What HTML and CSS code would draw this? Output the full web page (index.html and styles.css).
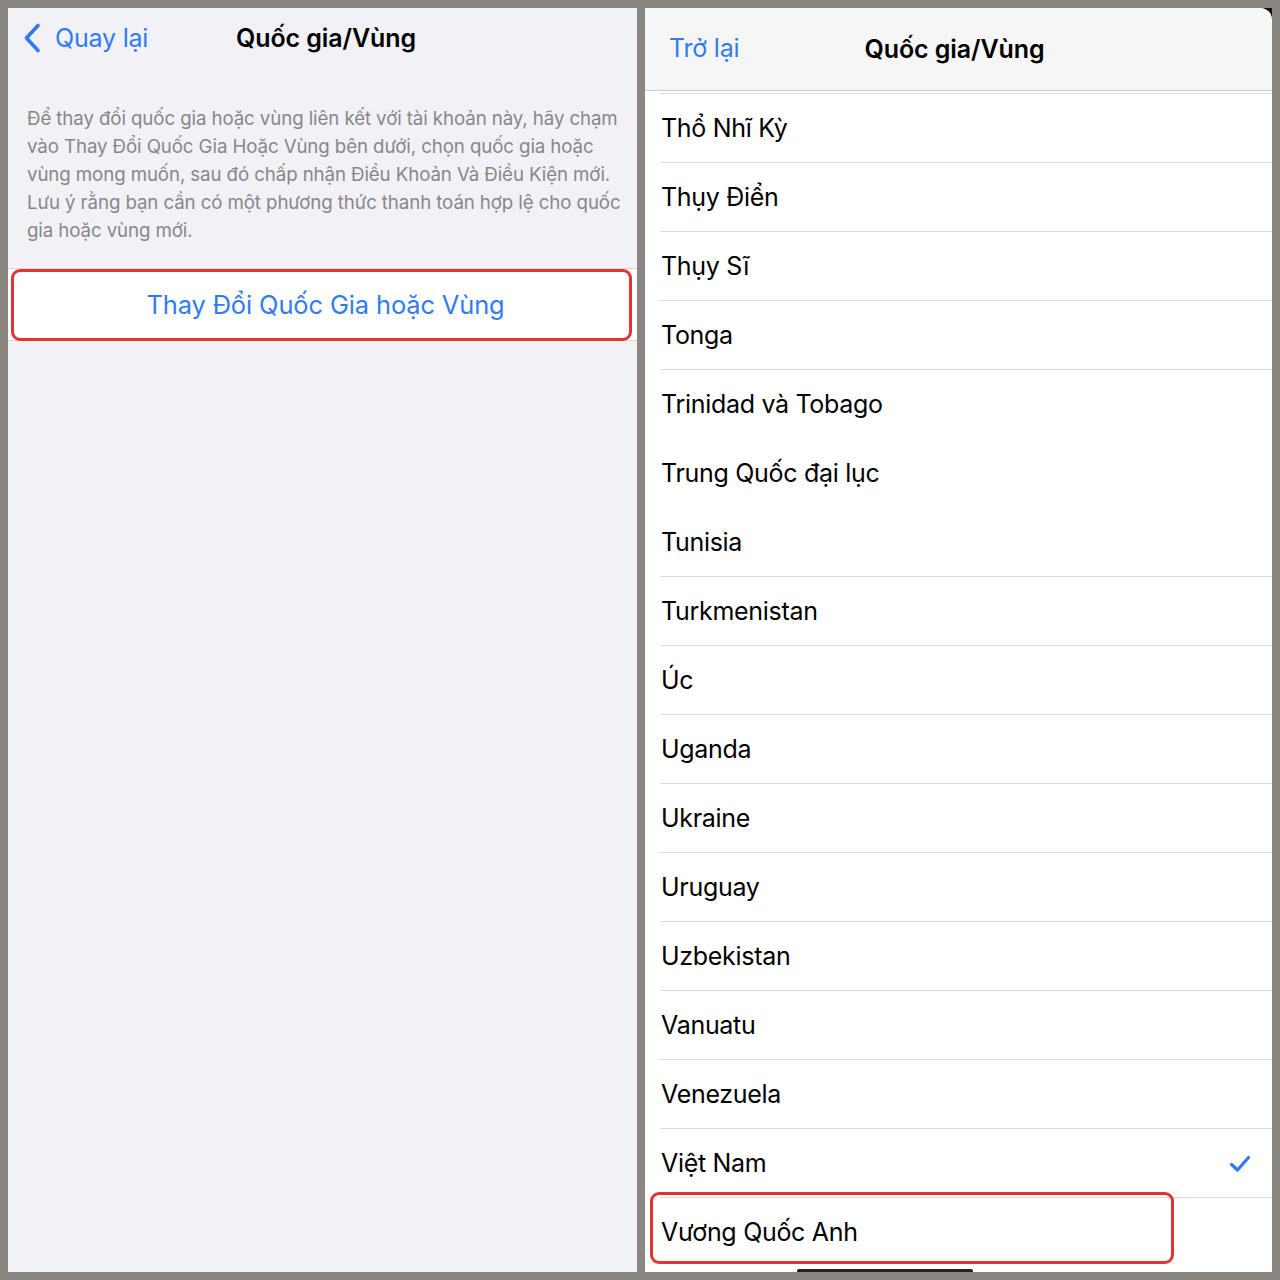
FILE: index.html
```html
<!DOCTYPE html>
<html lang="vi">
<head>
<meta charset="utf-8">
<title>Quốc gia/Vùng</title>
<link rel="stylesheet" href="styles.css">
</head>
<body>
<div class="frame">
  <section class="panel left">
    <header class="nav-left">
      <a class="back">
        <svg class="chev" width="18" height="30" viewBox="0 0 18 30"><path d="M15 2.5 L3.5 15 L15 27.5" fill="none" stroke="#2f7bf5" stroke-width="3.6" stroke-linecap="round" stroke-linejoin="round"/></svg>
        <span>Quay lại</span>
      </a>
      <h1 class="title title1">Quốc gia/Vùng</h1>
    </header>
    <p class="desc">Để thay đổi quốc gia hoặc vùng liên kết với tài khoản này, hãy chạm<br>vào Thay Đổi Quốc Gia Hoặc Vùng bên dưới, chọn quốc gia hoặc<br>vùng mong muốn, sau đó chấp nhận Điều Khoản Và Điều Kiện mới.<br>Lưu ý rằng bạn cần có một phương thức thanh toán hợp lệ cho quốc<br>gia hoặc vùng mới.</p>
    <div class="change-row">
      <span>Thay Đổi Quốc Gia hoặc Vùng</span>
      <div class="mark mark-left"></div>
    </div>
  </section>
  <section class="panel right">
    <div class="right-inner">
      <header class="nav-right">
        <a class="back2">Trở lại</a>
        <h1 class="title title2">Quốc gia/Vùng</h1>
      </header>
      <ul class="list">
        <li>Thổ Nhĩ Kỳ</li>
        <li>Thụy Điển</li>
        <li>Thụy Sĩ</li>
        <li>Tonga</li>
        <li>Trinidad và Tobago</li>
        <li class="nosep">Trung Quốc đại lục</li>
        <li class="nosep">Tunisia</li>
        <li>Turkmenistan</li>
        <li>Úc</li>
        <li>Uganda</li>
        <li>Ukraine</li>
        <li>Uruguay</li>
        <li>Uzbekistan</li>
        <li>Vanuatu</li>
        <li>Venezuela</li>
        <li class="checked">Việt Nam
          <svg class="check" width="22" height="18" viewBox="0 0 22 18"><path d="M2.5 9.5 L8.5 15 L19.5 2.5" fill="none" stroke="#2f7bf5" stroke-width="3.2" stroke-linecap="round" stroke-linejoin="round"/></svg>
        </li>
        <li class="selected">Vương Quốc Anh<div class="mark mark-right"></div></li>
      </ul>
      <div class="home"></div>
    </div>
  </section>
</div>
</body>
</html>
```

FILE: styles.css
```css
* { box-sizing: border-box; }
html, body { margin: 0; padding: 0; }
body {
  background: #8a8682;
  font-family: "Inter", "Noto Sans", sans-serif;
}
.frame {
  display: flex;
  gap: 8px;
  padding: 8px;
  width: 1280px;
  height: 1280px;
}
.panel { height: 1264px; }
.left {
  width: 629px;
  background: #f1f1f6;
  display: flex;
  flex-direction: column;
}
.nav-left {
  height: 60px;
  position: relative;
  display: flex;
  align-items: center;
  justify-content: center;
}
.back {
  position: absolute;
  left: 15px;
  top: 15px;
  display: flex;
  align-items: center;
  gap: 14px;
  color: #2f7bf5;
  font-size: 25px;
  letter-spacing: -0.2px;
}
.title {
  margin: 0;
  font-size: 25px;
  font-weight: 600;
  color: #000;
  letter-spacing: -0.1px;
}
.title1 { margin-left: 7px; }
.desc {
  margin: 37px 0 23px;
  padding: 0 0 0 19px;
  font-size: 18.7px;
  line-height: 28px;
  color: #87878c;
  letter-spacing: -0.1px;
  white-space: nowrap;
}
.change-row {
  position: relative;
  height: 73px;
  border-top: 1px solid #d7d7dc;
  border-bottom: 1px solid #d7d7dc;
  background: #fff;
  display: flex;
  align-items: center;
  justify-content: center;
  color: #2f7bf5;
  font-size: 25.4px;
  letter-spacing: -0.1px;
}
.change-row span { margin-left: 6px; }
.mark {
  position: absolute;
  border: 3px solid #e23434;
  border-radius: 9px;
}
.mark-left { top: 0; bottom: -1px; left: 3px; right: 5px; }
.right {
  width: 627px;
  background: #111;
}
.right-inner {
  position: relative;
  height: 100%;
  background: #fff;
  border-top-right-radius: 12px;
  overflow: hidden;
}
.nav-right {
  height: 83px;
  background: #f6f6f6;
  border-bottom: 1px solid #cdcdcd;
  display: flex;
  align-items: center;
  justify-content: center;
  position: relative;
}
.back2 {
  position: absolute;
  left: 24px;
  top: 25px;
  color: #2f7bf5;
  font-size: 25px;
  letter-spacing: -0.2px;
}
.title2 { margin-left: -8px; margin-top: 0; }
.list {
  list-style: none;
  margin: 2px 0 0 15px;
  padding: 0;
}
.list li {
  position: relative;
  height: 69px;
  border-top: 1px solid #dcdcdc;
  display: flex;
  align-items: center;
  padding-left: 1px;
  font-size: 25px;
  color: #000;
  letter-spacing: -0.3px;
}
.list li.nosep { border-top-color: transparent; }
.check {
  position: absolute;
  right: 21px;
  top: 26px;
}
.mark-right {
  top: -6px;
  left: -10px;
  width: 524px;
  height: 72px;
}
.home {
  position: absolute;
  bottom: 0;
  left: 152px;
  width: 176px;
  height: 3px;
  background: #222;
  border-radius: 2px 2px 0 0;
}
```
